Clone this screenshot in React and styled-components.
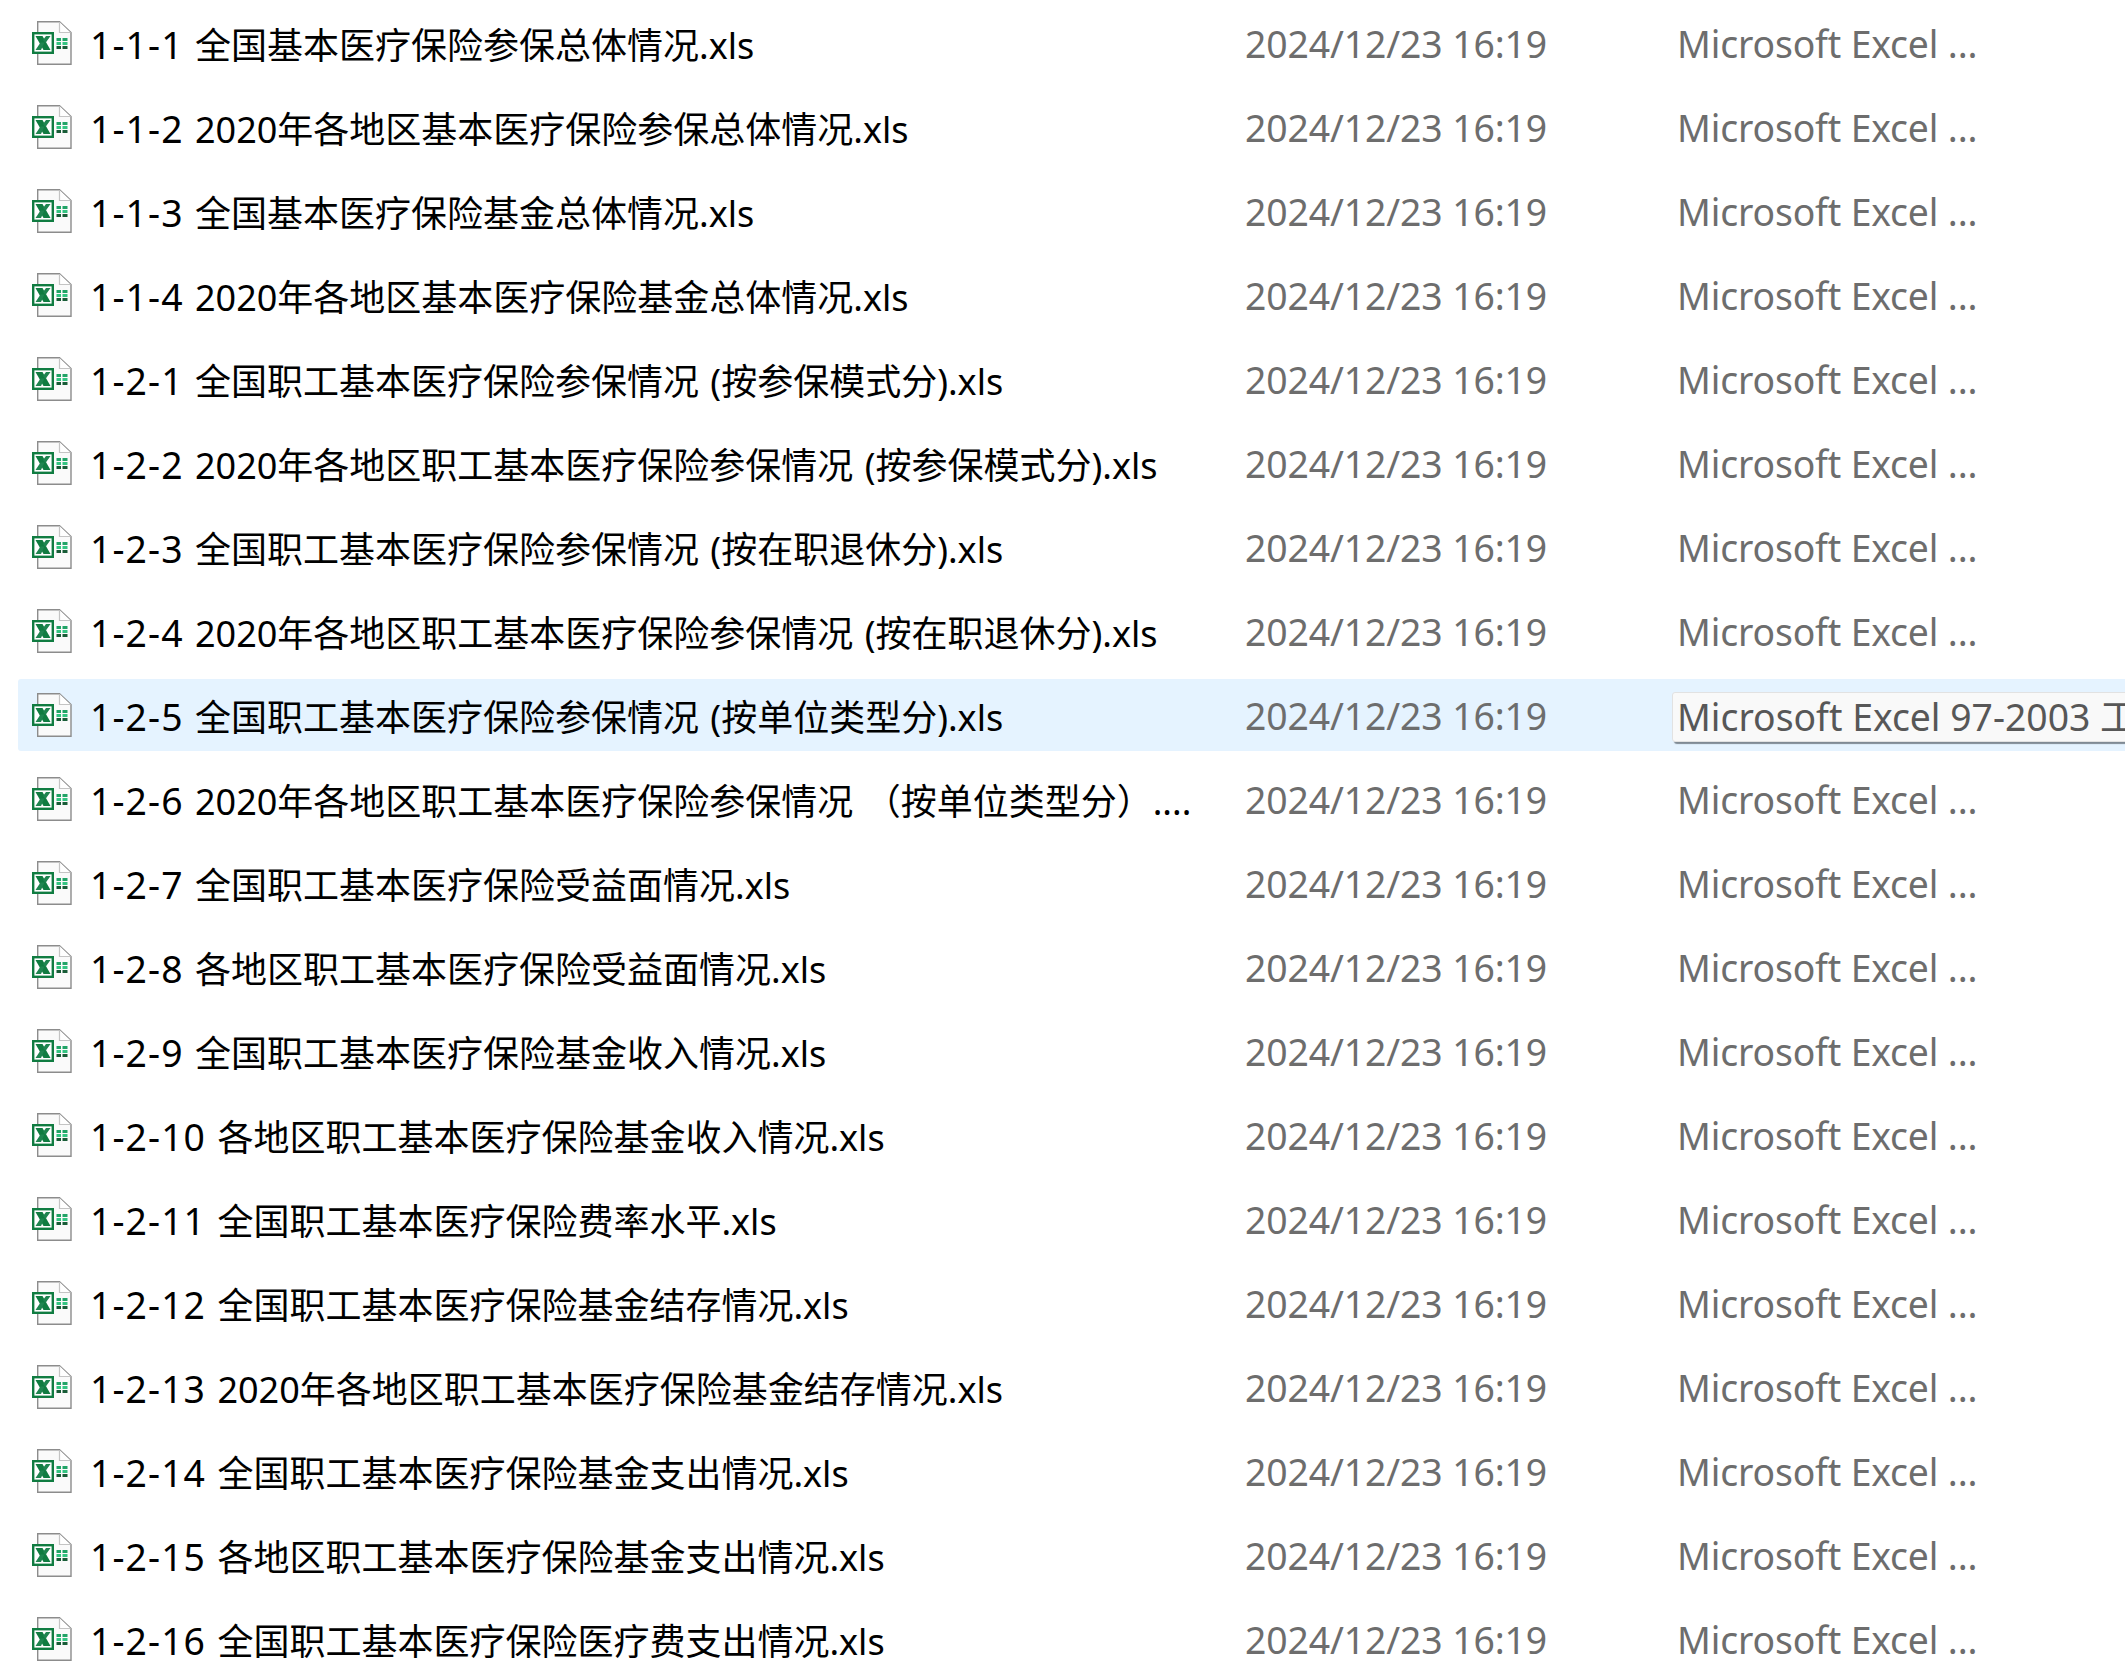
import React from 'react'
import styled, { createGlobalStyle } from 'styled-components'

const GlobalStyle = createGlobalStyle`
  html, body {
    margin: 0;
    height: 100%;
    overflow: hidden;
    background: #fff;
  }
`

const FileList = styled.div`
  height: 1666px;
  overflow: hidden;
  padding: 7px 0 0 18px;
  display: flex;
  flex-direction: column;
  gap: 12px;
  font-family: "Noto Sans", "Noto Sans CJK SC", sans-serif;
  font-size: 37.33px;
`

const Row = styled.div`
  position: relative;
  flex: 0 0 72px;
  display: grid;
  grid-template-columns: 1227px 432px 1fr;
  align-items: center;
  border-radius: 3px 0 0 3px;
  background: ${(p) => (p.$selected ? '#e5f3ff' : 'transparent')};
`

const NameCell = styled.div`
  display: flex;
  align-items: center;
  gap: 18px;
  padding-left: 14px;
  color: #000;
  white-space: nowrap;
`

const Name = styled.span`
  font-size: 36px;
  word-spacing: 2px;
`

const Code = styled.span`
  font-size: 37.33px;
  letter-spacing: 1.1px;
`

const DateCell = styled.div`
  color: #6d6d6d;
  white-space: nowrap;
  letter-spacing: -0.1px;
`

const TypeCell = styled.div`
  color: #6d6d6d;
  white-space: nowrap;
  letter-spacing: -0.15px;
`

const Tooltip = styled.div`
  position: absolute;
  left: 1654px;
  top: 13px;
  width: 600px;
  height: 50px;
  box-sizing: border-box;
  padding: 0 0 4px 4px;
  display: flex;
  align-items: center;
  background: #f9f9f9;
  border: 1px solid #e2e2e2;
  border-radius: 3px;
  box-shadow: 2px 2px 1px #7f8a94;
  color: #575757;
  white-space: nowrap;
`

const ExcelIcon = () => (
  <svg width="40" height="44" viewBox="0 0 40 44" style={{ flex: 'none' }}>
    <path d="M5.7 .7H27.5L39 11.5V43.3H5.7Z" fill="#fafafa" stroke="#8c8c8c" strokeWidth="1.4" />
    <path d="M27.5 1V11.5H38.5" fill="#fff" stroke="#c4c4c4" strokeWidth="1.2" />
    <rect x="1.2" y="12.2" width="19.6" height="19.6" fill="#fff" stroke="#107c41" strokeWidth="2.4" />
    <path d="M3.5 15H10.5L18.5 29H11.5Z" fill="#107c41" />
    <path d="M3.5 29L8.5 21.5H12.5L9 29ZM11 19L14 15H18.5L13.5 22Z" fill="#1f8550" />
    <path d="M24.5 17H29V20H24.5ZM30.5 17H35.5V20H30.5Z" fill="#21a366" />
    <path d="M24.5 21H29V24H24.5ZM30.5 21H35.5V24H30.5Z" fill="#33c481" />
    <path d="M24.5 25H29V28H24.5ZM30.5 25H35.5V28H30.5Z" fill="#185c37" />
  </svg>
)

const files = [
  ['1-1-1', '全国基本医疗保险参保总体情况.xls'],
  ['1-1-2', '2020年各地区基本医疗保险参保总体情况.xls'],
  ['1-1-3', '全国基本医疗保险基金总体情况.xls'],
  ['1-1-4', '2020年各地区基本医疗保险基金总体情况.xls'],
  ['1-2-1', '全国职工基本医疗保险参保情况 (按参保模式分).xls'],
  ['1-2-2', '2020年各地区职工基本医疗保险参保情况 (按参保模式分).xls'],
  ['1-2-3', '全国职工基本医疗保险参保情况 (按在职退休分).xls'],
  ['1-2-4', '2020年各地区职工基本医疗保险参保情况 (按在职退休分).xls'],
  ['1-2-5', '全国职工基本医疗保险参保情况 (按单位类型分).xls'],
  ['1-2-6', '2020年各地区职工基本医疗保险参保情况 （按单位类型分）....'],
  ['1-2-7', '全国职工基本医疗保险受益面情况.xls'],
  ['1-2-8', '各地区职工基本医疗保险受益面情况.xls'],
  ['1-2-9', '全国职工基本医疗保险基金收入情况.xls'],
  ['1-2-10', '各地区职工基本医疗保险基金收入情况.xls'],
  ['1-2-11', '全国职工基本医疗保险费率水平.xls'],
  ['1-2-12', '全国职工基本医疗保险基金结存情况.xls'],
  ['1-2-13', '2020年各地区职工基本医疗保险基金结存情况.xls'],
  ['1-2-14', '全国职工基本医疗保险基金支出情况.xls'],
  ['1-2-15', '各地区职工基本医疗保险基金支出情况.xls'],
  ['1-2-16', '全国职工基本医疗保险医疗费支出情况.xls'],
]

const App = () => {
  return (
    <>
      <GlobalStyle />
      <FileList>
        {files.map(([code, title], i) => (
          <Row key={code} $selected={i === 8}>
            <NameCell>
              <ExcelIcon />
              <Name><Code>{code}</Code> {title}</Name>
            </NameCell>
            <DateCell>2024/12/23 16:19</DateCell>
            {i === 8
              ? <Tooltip>Microsoft Excel 97-2003 工作表</Tooltip>
              : <TypeCell>Microsoft Excel ...</TypeCell>}
          </Row>
        ))}
      </FileList>
    </>
  )
}

export default App
